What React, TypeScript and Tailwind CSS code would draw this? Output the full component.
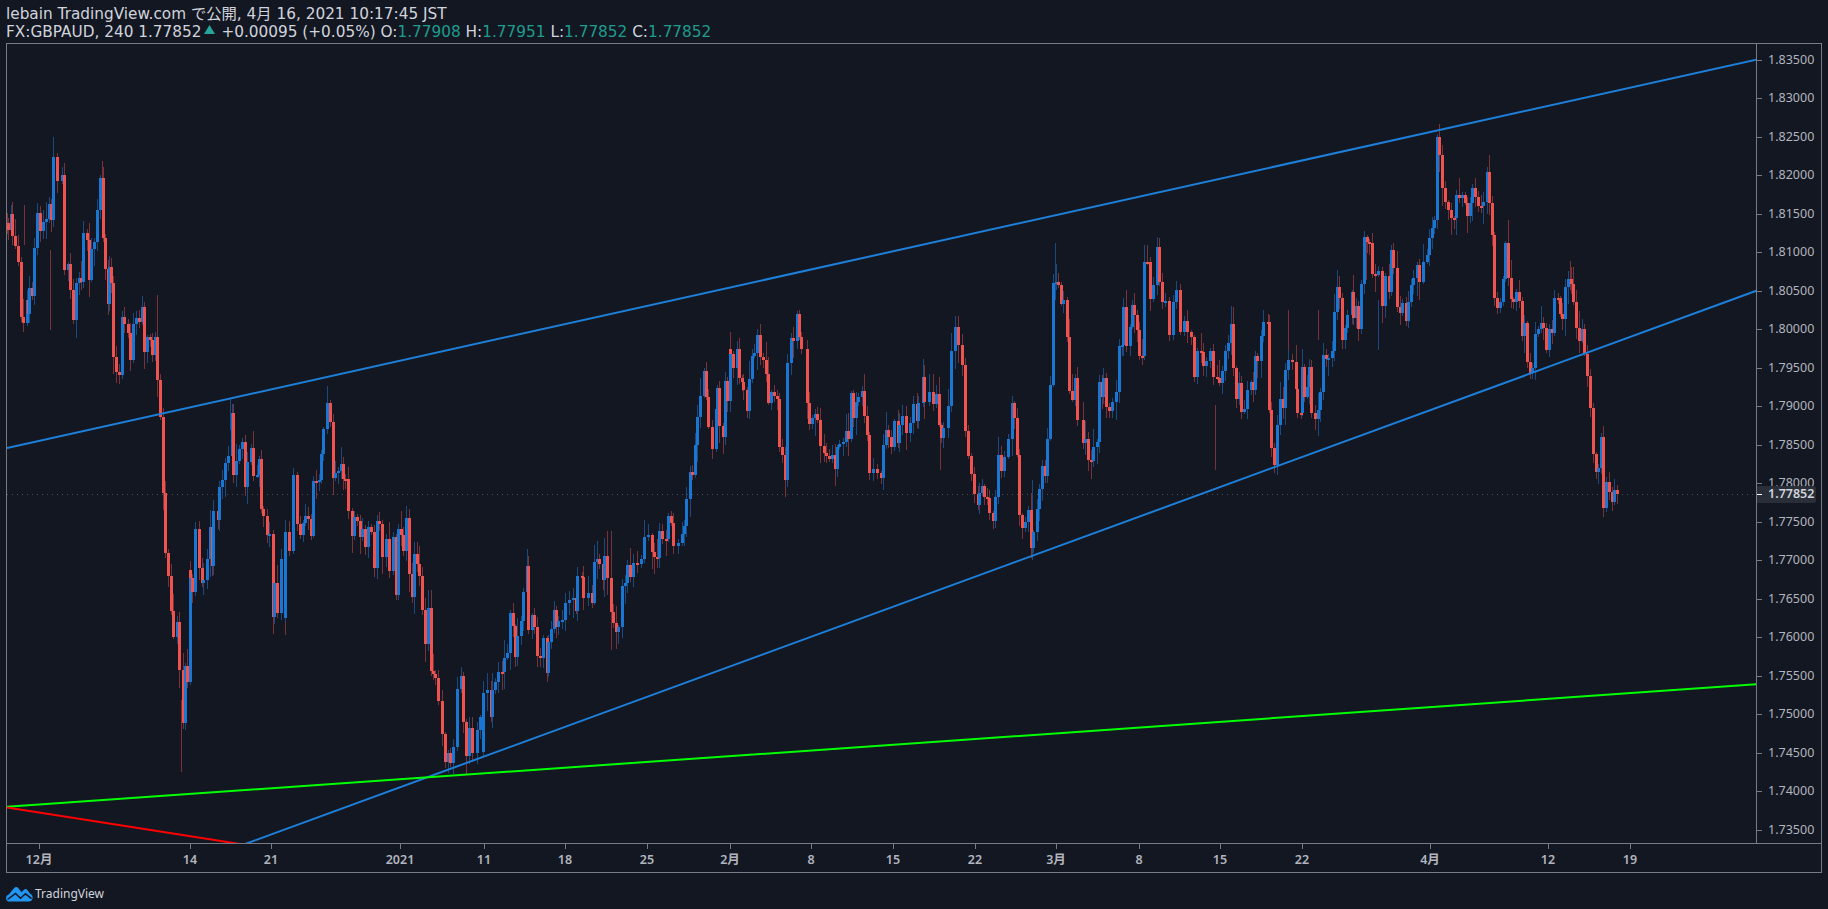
type Seg = { ox: number; oy: number; pts: number[] };

// traced from the chart as [zoomX, zoomY] pairs, each block has its own origin (scale 3)
const segs: Seg[] = [
  {
    ox: 0,
    oy: 120,
    pts: [21,310, 24,330, 32,282, 37,348, 46,378, 55,425, 64,590, 70,608, 80,540, 85,582, 88,505, 95,527, 103,385, 112,280, 120,332, 128,305, 137,297, 147,252, 152,300, 160,110, 170,182, 185,165, 193,450, 203,432, 210,510, 218,600, 227,490, 236,475, 243,487, 250,340, 260,360, 267,480, 273,387, 283,367, 292,270, 300,175, 308,353, 316,447, 325,552, 326,442, 333,490, 340,710, 349,755, 358,765, 366,590, 373,612, 383,640, 390,720, 398,612, 407,595, 416,605, 425,562, 432,695, 440,652, 449,660, 457,705, 465,652, 472,780, 480,890],
  },
  {
    ox: 150,
    oy: 380,
    pts: [38,340, 46,520, 55,587, 62,693, 70,770, 80,727, 88,870, 100,1028, 104,858, 112,905, 120,570, 120,595, 127,635, 136,447, 146,565, 155,610, 160,600, 170,537, 180,440, 185,557, 190,393, 203,420, 208,322, 217,300, 226,250, 235,228, 245,98, 250,285, 258,243, 268,207, 277,186, 284,320, 292,246, 302,204, 310,287, 320,286, 328,237, 332,388, 340,407, 350,465, 358,461, 368,655, 368,710, 373,610, 382,698, 392,537, 404,713, 404,456, 416,513, 430,285, 440,432, 450,465, 458,428, 465,407, 473,417, 484,467, 490,303, 498,305, 508,300, 512,222, 520,148, 530,68, 540,125, 548,293, 556,279, 565,273, 572,252, 578,298, 585,298, 595,392, 606,467, 612,411, 620,422, 629,470, 636,447, 644,500, 653,441, 662,455, 672,565, 680,422, 686,432, 695,530, 708,477, 718,572, 730,471, 738,645, 744,447, 752,465, 760,512, 767,413, 776,583, 786,650, 793,522, 800,552, 808,587, 816,690, 824,792, 834,684, 842,872, 850,882, 856,895, 865,962, 875,1063, 885,1145, 893,1120],
  },
  {
    ox: 400,
    oy: 380,
    pts: [150,1148, 160,1100, 172,928, 184,888, 190,1027, 198,1127, 206,1045, 215,1118, 232,1050, 240,1012, 250,1115, 250,940, 262,930, 273,1010, 277,930, 285,907, 295,877, 305,877, 312,835, 320,820, 330,700, 338,737, 345,830, 352,768, 362,723, 370,637, 380,558, 385,750, 396,705, 403,740, 410,827, 420,833, 428,775, 440,878, 444,787, 452,747, 462,690, 467,740, 475,722, 485,720, 495,670, 508,660, 520,655, 527,692, 532,588, 545,590, 550,655, 565,640, 575,668, 582,545, 590,537, 597,551, 608,600, 612,528, 621,593, 632,695, 640,730, 647,755, 655,742, 665,618, 675,610, 680,555, 689,590, 698,550, 712,552, 722,538, 731,471, 745,465, 755,515, 763,530, 770,533, 778,453, 787,478, 798,478, 803,408, 812,428, 820,497, 835,488, 845,462, 853,437, 859,358, 869,277, 877,285],
  },
  {
    ox: 680,
    oy: 280,
    pts: [45,495, 50,411, 60,348, 72,272, 78,352, 85,440, 95,507, 108,388, 110,325, 118,437, 128,470, 135,303, 142,362, 151,207, 151,223, 160,263, 172,207, 176,293, 185,305, 190,330, 200,392, 207,297, 217,228, 223,218, 232,165, 241,230, 250,240, 258,283, 265,368, 274,337, 283,347, 290,358, 298,500, 307,525, 315,600, 322,250, 332,175, 340,182, 350,102, 356,170, 364,208, 380,368, 388,433, 397,415, 405,402, 412,420, 421,497, 431,520, 438,527, 446,538, 455,525, 464,567, 471,502, 478,492, 488,487, 497,453, 503,478, 512,340, 520,413, 528,365, 535,350, 545,333, 553,407, 560,465, 568,578, 578,568, 592,580, 602,593, 610,495, 618,450, 625,470, 634,500, 643,423, 655,490, 657,435, 667,407, 677,458, 690,430, 700,372, 710,422, 715,370, 728,290, 733,365, 748,337, 758,372, 768,342, 777,435, 782,473, 790,445, 805,378, 814,213, 826,140, 834,195, 846,255, 856,452, 864,527, 872,583, 883,642, 895,675, 897,640, 905,618, 913,650, 921,653, 928,700, 938,722, 946,652, 955,525, 962,572, 971,530, 985,478, 995,370, 1003,413, 1010,525, 1018,705, 1027,743, 1036,727, 1045,690, 1053,805, 1060,757, 1070,688, 1076,628, 1085,558, 1095,587, 1100,478, 1110,315, 1118,10, 1127,5, 1134,15, 1142,72, 1150,60, 1160,172, 1168,333, 1176,360, 1185,295, 1192,420],
  },
  {
    ox: 1040,
    oy: 220,
    pts: [128,670, 135,657, 145,720, 152,722, 160,680, 170,665, 178,487, 185,530, 190,475, 197,560, 208,572, 217,547, 227,517, 236,378, 245,375, 250,262, 258,378, 270,320, 275,255, 283,285, 290,330, 298,408, 305,408, 312,127, 320,127, 330,237, 340,195, 350,82, 356,187, 365,245, 376,243, 388,345, 398,247, 408,210, 420,335, 432,303, 442,335, 452,352, 463,470, 472,393, 482,395, 488,437, 497,423, 510,393, 520,470, 530,473, 537,490, 545,452, 554,393, 563,370, 572,312, 578,445, 587,537, 597,490, 604,575, 612,567, 620,510, 632,487, 640,510, 645,408, 652,422, 662,347, 668,307, 683,307, 688,570, 693,685, 702,735, 710,615, 720,537, 730,563, 735,450, 743,420, 757,427, 767,507, 772,578, 782,580, 786,440, 792,530, 800,500, 808,440, 813,578, 825,597, 833,570, 840,515, 848,405, 857,417, 865,415, 875,393, 882,277, 890,202, 897,233, 905,360, 914,325, 922,285, 935,217, 938,293, 947,258, 955,327, 963,192, 972,52, 980,65, 988,70, 995,162, 1005,165, 1015,153, 1025,258, 1035,168, 1048,215, 1052,90, 1060,145, 1070,260, 1080,280, 1087,250, 1098,302, 1105,245, 1112,195, 1120,175, 1130,135, 1138,187, 1150,125, 1160,105, 1168,55, 1175,25, 1182,0],
  },
  {
    ox: 1380,
    oy: 110,
    pts: [172,82, 178,135, 187,235, 196,277, 205,300, 213,323, 221,323, 229,256, 238,265, 245,255, 254,278, 262,317, 270,280, 277,235, 286,260, 295,287, 302,288, 310,277, 320,186, 328,280, 336,375, 343,565, 352,595, 360,575, 368,508, 376,400, 384,503, 392,568, 400,575, 408,545, 418,572, 426,678, 433,640, 442,757, 450,790, 457,775, 466,672, 475,657, 482,640, 490,653, 498,720, 508,657, 517,670, 523,565, 535,565, 540,612, 547,628, 556,532, 565,508, 572,522, 580,575, 589,655, 598,692, 606,657, 613,732, 622,797, 631,895, 638,1033, 647,1085, 655,1075, 663,982, 670,1195, 679,1117, 688,1147, 697,1175, 703,1140, 712,1152],
  },
];

type Candle = { x: number; top: number; bottom: number; up: boolean; hi: number; lo: number };

function buildCandles(): Candle[] {
  const out: Candle[] = [];
  let prev = 223;
  let seed = 7;
  const rnd = () => {
    seed = (seed * 16807) % 2147483647;
    return (seed % 1000) / 1000;
  };
  for (const s of segs) {
    for (let i = 0; i < s.pts.length; i += 2) {
      const x = s.ox + s.pts[i] / 3;
      const c = s.oy + s.pts[i + 1] / 3;
      const top = Math.min(prev, c);
      const bottom = Math.max(prev, c);
      const a = rnd();
      const b = rnd();
      const hi = top - (a > 0.85 ? 10 + a * 8 : 2 + a * 12);
      const lo = bottom + (b > 0.85 ? 10 + b * 8 : 2 + b * 12);
      out.push({ x, top, bottom, up: c < prev, hi, lo });
      prev = c;
    }
  }
  return out;
}

const candles = buildCandles();

// long wicks that stand out in the reference [x, y1, y2, up]
const spikes: [number, number, number, boolean][] = [
  [53, 137, 180, true], [102, 161, 230, false], [157, 295, 330, false], [181, 700, 772, false],
  [230, 399, 430, true], [50, 250, 330, false], [24, 205, 245, false], [1439, 124, 150, false],
  [1508, 220, 250, false], [1570, 261, 290, false], [1055, 243, 300, true], [1032, 480, 560, true],
  [940, 410, 470, false], [1366, 240, 280, false], [1318, 310, 340, false], [611, 531, 650, false],
  [607, 531, 580, false], [1288, 310, 350, false], [1215, 405, 470, false], [1378, 300, 350, true],
];

const priceLabels = [
  "1.83500", "1.83000", "1.82500", "1.82000", "1.81500", "1.81000", "1.80500", "1.80000", "1.79500", "1.79000", "1.78500",
  "1.78000", "1.77500", "1.77000", "1.76500", "1.76000", "1.75500", "1.75000", "1.74500", "1.74000", "1.73500",
];

const timeTicks = [
  { x: 39, t: "12月" }, { x: 190, t: "14" }, { x: 271, t: "21" }, { x: 400, t: "2021" },
  { x: 484, t: "11" }, { x: 565, t: "18" }, { x: 647, t: "25" }, { x: 730, t: "2月" },
  { x: 811, t: "8" }, { x: 893, t: "15" }, { x: 975, t: "22" }, { x: 1056, t: "3月" },
  { x: 1139, t: "8" }, { x: 1220, t: "15" }, { x: 1302, t: "22" }, { x: 1430, t: "4月" },
  { x: 1548, t: "12" }, { x: 1630, t: "19" },
];

const font = { fontFamily: '"Noto Sans", "Noto Sans CJK JP", sans-serif' };
const headFont = { fontFamily: '"DejaVu Sans", "Noto Sans CJK JP", sans-serif' };

function Chart() {
  return (
    <svg width={1750} height={800} viewBox="7 44 1750 800" className="block">
      <line x1={7} x2={1757} y1={494.5} y2={494.5} stroke="#4a4e59" strokeWidth={1} strokeDasharray="1 4" />
      <g shapeRendering="crispEdges">
        {candles.map((c, i) => (
          <rect key={i} x={Math.round(c.x)} y={c.hi} width={1} height={c.lo - c.hi} fill={c.up ? "#1a4a80" : "#7a3138"} />
        ))}
        {spikes.map(([x, y1, y2, up], i) => (
          <rect key={i} x={x} y={y1} width={1} height={y2 - y1} fill={up ? "#1a4a80" : "#7a3138"} />
        ))}
        {candles.map((c, i) => (
          <rect
            key={i}
            x={Math.round(c.x - 1)}
            y={c.top}
            width={3}
            height={Math.max(c.bottom - c.top, 2)}
            fill={c.up ? "#1976d2" : "#ef5350"}
          />
        ))}
      </g>
      <g fill="none" strokeWidth={2}>
        <line x1={7} y1={448} x2={1757} y2={59.5} stroke="#1e7fd9" />
        <line x1={245} y1={844} x2={1757} y2={290.5} stroke="#1e7fd9" />
        <line x1={7} y1={806.7} x2={1757} y2={684.3} stroke="#00ff00" />
        <line x1={7} y1={807.5} x2={240} y2={844} stroke="#ff0000" />
      </g>
    </svg>
  );
}

function Logo() {
  return (
    <svg width={27} height={16} viewBox="0 0 27 16">
      <path
        fill="#2196f3"
        d="M0 12.5C0 10.4 1.2 8.8 3 8.2L8.6 1.6C9.5.6 11 .7 11.8 1.6L15.6 6.2 18.2 3.6C19 2.8 20.4 2.8 21.1 3.7L24.4 8C26 8.6 26.8 10.2 26.6 12 26.4 14.3 24.8 15.6 22.6 15.6H3.6C1.5 15.6 0 14.4 0 12.5Z"
      />
      <path fill="none" stroke="#131722" strokeWidth={1.5} d="M1.5 13.5 9.5 7.5 14.5 12.3 19.5 7.8 25.5 12.6" />
    </svg>
  );
}

export default function App() {
  return (
    <div className="h-[909px] w-[1828px] overflow-hidden bg-[#131722] text-[#d1d4dc]" style={font}>
      <div className="h-[43px] pl-[6px] pt-[6px] text-[15.3px] leading-[17.5px]" style={headFont}>
        <div>lebain TradingView.com で公開, 4月 16, 2021 10:17:45 JST</div>
        <div className="flex items-center whitespace-pre">
          <span>FX:GBPAUD, 240 1.77852</span>
          <svg width={11} height={9} viewBox="0 0 11 9" className="mx-[2px] mb-[5px]">
            <path d="M5.5 0 11 9H0Z" fill="#26a69a" />
          </svg>
          <span> +0.00095 (+0.05%) O:</span>
          <span className="text-[#1f9c8e]">1.77908</span>
          <span> H:</span>
          <span className="text-[#1f9c8e]">1.77951</span>
          <span> L:</span>
          <span className="text-[#1f9c8e]">1.77852</span>
          <span> C:</span>
          <span className="text-[#1f9c8e]">1.77852</span>
        </div>
      </div>

      <div className="ml-[6px] h-[830px] w-[1816px] border border-[#787b86]">
        <div className="flex h-[800px] border-b border-[#787b86]">
          <div className="w-[1750px] overflow-hidden border-r border-[#787b86] box-content">
            <Chart />
          </div>
          <div className="relative flex w-[64px] flex-col">
            <div className="-mt-[3px] flex flex-col">
              {priceLabels.map((p) => (
                <div key={p} className="flex h-[38.5px] items-center text-[12.5px] text-[#b2b5be]">
                  <span className="h-px w-[5px] bg-[#787b86]" />
                  <span className="ml-[6px]">{p}</span>
                </div>
              ))}
            </div>
            <div className="absolute left-0 top-[442px] flex h-[17px] w-[59px] items-center rounded-r-[2px] bg-[#2a2e39] text-[12.5px] font-semibold text-[#d1d4dc]">
              <span className="h-px w-[5px] bg-white" />
              <span className="ml-[6px]">1.77852</span>
            </div>
          </div>
        </div>
        <div className="flex h-[28px] text-[12.5px] font-semibold text-[#b2b5be]">
          <div style={{ width: timeTicks[0].x - 7 }} />
          {timeTicks.map((t, i) => {
            const next = timeTicks[i + 1]?.x ?? t.x + 40;
            return (
              <div key={i} style={{ width: next - t.x }}>
                <div className="h-[5px] w-px bg-[#787b86]" />
                <div className="w-max -translate-x-1/2 pt-[2px] leading-[17px]">{t.t}</div>
              </div>
            );
          })}
        </div>
      </div>

      <div className="flex items-center pl-[6px] pt-[12px] text-[12px] text-[#d1d4dc]">
        <Logo />
        <span className="ml-[2px]">TradingView</span>
      </div>
    </div>
  );
}
